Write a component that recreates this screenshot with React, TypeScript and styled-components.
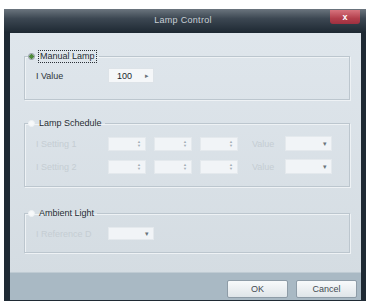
import styled, { createGlobalStyle } from 'styled-components';

const GlobalStyle = createGlobalStyle`
  html, body {
    margin: 0;
    padding: 0;
    background: #ffffff;
  }
  body {
    font-family: 'Liberation Sans', Arial, sans-serif;
  }
`;

function Spin() {
  return (
    <SpinBox>
      <SpinArrows>
        <span>▲</span>
        <span>▼</span>
      </SpinArrows>
    </SpinBox>
  );
}

function ScheduleRow({ label }: { label: string }) {
  return (
    <Row>
      <FieldLabel $disabled>{label}</FieldLabel>
      <SpinGroup>
        <Spin />
        <Spin />
        <Spin />
      </SpinGroup>
      <ValueLabel>Value</ValueLabel>
      <Select $width={47} $disabled>
        <span />
        <Caret>▾</Caret>
      </Select>
    </Row>
  );
}

export default function App() {
  return (
    <Page>
      <GlobalStyle />
      <Window>
        <TitleBar>
          <Title>Lamp Control</Title>
          <CloseButton>x</CloseButton>
        </TitleBar>
        <Body>
          <Content>
            <Group $pt={6} $pb={16}>
              <Legend>
                <Radio $checked />
                <FocusLabel>Manual Lamp</FocusLabel>
              </Legend>
              <Row>
                <FieldLabel>I Value</FieldLabel>
                <Select $width={46}>
                  <span>100</span>
                  <Caret>▸</Caret>
                </Select>
              </Row>
            </Group>

            <Group $pt={7} $pb={12} $mt={17}>
              <Legend>
                <Radio />
                <span>Lamp Schedule</span>
              </Legend>
              <Rows>
                <ScheduleRow label="I Setting 1" />
                <ScheduleRow label="I Setting 2" />
              </Rows>
            </Group>

            <Group $pt={8} $pb={12} $mt={20}>
              <Legend>
                <Radio />
                <span>Ambient Light</span>
              </Legend>
              <Row>
                <FieldLabel $disabled>I Reference D</FieldLabel>
                <Select $width={46} $height={13} $disabled>
                  <span />
                  <Caret>▾</Caret>
                </Select>
              </Row>
            </Group>
          </Content>
          <Footer>
            <Button>OK</Button>
            <Button>Cancel</Button>
          </Footer>
        </Body>
      </Window>
    </Page>
  );
}

const Page = styled.div`
  width: 370px;
  height: 304px;
  padding: 9px 0 0 4px;
  box-sizing: border-box;
`;

const Window = styled.div`
  width: 362px;
  height: 292px;
  display: flex;
  flex-direction: column;
  background: #1f2a34;
  box-sizing: border-box;
`;

const TitleBar = styled.div`
  height: 24px;
  flex: none;
  display: flex;
  align-items: flex-start;
  justify-content: center;
  position: relative;
  background: linear-gradient(#6b757e 0%, #3c4752 40%, #1d2832 100%);
`;

const Title = styled.div`
  margin-top: 6px;
  margin-left: -4px;
  font-size: 9px;
  color: #c9d0d6;
  letter-spacing: 0.3px;
`;

const CloseButton = styled.div`
  position: absolute;
  top: 1px;
  right: 6px;
  width: 30px;
  height: 14px;
  display: flex;
  align-items: center;
  justify-content: center;
  background: linear-gradient(#d7737d, #b33f4c 60%, #9e3040);
  border-radius: 0 0 3px 3px;
  color: #ffffff;
  font-size: 9px;
  font-weight: bold;
  line-height: 1;
`;

const Body = styled.div`
  flex: 1;
  display: flex;
  flex-direction: column;
  margin: 0 5px 3px 6px;
  background: linear-gradient(#dfe6ec 0%, #d3dbe1 100%);
`;

const Content = styled.div`
  flex: 1;
  padding: 17px 11px 0 14px;
  display: flex;
  flex-direction: column;
`;

const Group = styled.fieldset<{ $pt: number; $pb: number; $mt?: number }>`
  margin: ${({ $mt }) => $mt || 0}px 0 0 0;
  padding: ${({ $pt }) => $pt}px 0 ${({ $pb }) => $pb}px 11px;
  border: 1px solid #bcc6ce;
  box-shadow: inset 1px 1px 0 #eef2f5, 1px 1px 0 #eef2f5;
  min-width: 0;
`;

const Legend = styled.legend`
  margin-left: -8px;
  padding: 0 3px 0 0;
  display: flex;
  align-items: center;
  gap: 4px;
  height: 12px;
  font-size: 9px;
  color: #262d33;
`;

const Radio = styled.span<{ $checked?: boolean }>`
  width: 7px;
  height: 7px;
  border-radius: 50%;
  box-sizing: border-box;
  border: 1px solid ${({ $checked }) => ($checked ? '#8c969e' : '#eef2f5')};
  background: ${({ $checked }) =>
    $checked ? 'radial-gradient(circle, #4e8a3a 0 2px, #dfe5ea 2.5px)' : '#f7f9fa'};
`;

const FocusLabel = styled.span`
  outline: 1px dotted #2a3036;
  padding: 0 1px;
  line-height: 11px;
`;

const Rows = styled.div`
  display: flex;
  flex-direction: column;
  gap: 8px;
`;

const Row = styled.div`
  display: flex;
  align-items: center;
`;

const FieldLabel = styled.span<{ $disabled?: boolean }>`
  width: 72px;
  font-size: 9px;
  color: ${({ $disabled }) => ($disabled ? '#c5cdd3' : '#2e353b')};
`;

const ValueLabel = styled.span`
  width: 33px;
  margin-left: 14px;
  font-size: 9px;
  color: #c5cdd3;
`;

const SpinGroup = styled.div`
  display: flex;
  gap: 8px;
`;

const SpinBox = styled.div`
  width: 38px;
  height: 14px;
  box-sizing: border-box;
  display: flex;
  justify-content: flex-end;
  align-items: center;
  padding-right: 4px;
  background: #f1f4f7;
  border: 1px solid #e4e9ed;
`;

const SpinArrows = styled.div`
  display: flex;
  flex-direction: column;
  font-size: 4px;
  line-height: 4px;
  color: #a3adb5;
`;

const Select = styled.div<{ $width: number; $height?: number; $disabled?: boolean }>`
  width: ${({ $width }) => $width}px;
  height: ${({ $height }) => $height || 15}px;
  box-sizing: border-box;
  display: flex;
  align-items: center;
  justify-content: space-between;
  padding: 0 4px 0 8px;
  font-size: 9px;
  color: #20272d;
  background: ${({ $disabled }) => ($disabled ? '#f1f4f7' : '#f5f7f9')};
  border: 1px solid ${({ $disabled }) => ($disabled ? '#e4e9ed' : '#dde3e8')};
`;

const Caret = styled.span`
  font-size: 7px;
  color: #6a747c;
`;

const Footer = styled.div`
  height: 28px;
  flex: none;
  margin-top: 19px;
  display: flex;
  justify-content: flex-end;
  align-items: flex-start;
  gap: 8px;
  padding: 7px 4px 0 0;
  box-sizing: border-box;
  background: #a9b9c4;
  border-top: 1px solid #bfcbd3;
`;

const Button = styled.div`
  width: 61px;
  height: 18px;
  box-sizing: border-box;
  display: flex;
  align-items: center;
  justify-content: center;
  font-size: 9px;
  color: #434b52;
  background: linear-gradient(#f8fafb, #dfe5e9);
  border: 1px solid #8e9ca7;
  border-radius: 2px;
`;
